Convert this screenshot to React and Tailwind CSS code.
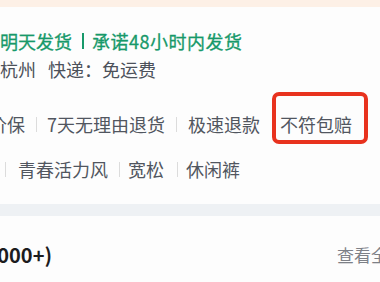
import React from 'react';

const Divider = ({ className = '' }) => (
  <span className={`inline-block w-px h-[15px] bg-[#dcdcdc] shrink-0 ${className}`} />
);

const App = () => {
  return (
    <div
      className="w-[380px] h-[282px] overflow-hidden bg-[#fdfdfd] text-[18px] whitespace-nowrap"
      style={{ fontFamily: '"Noto Sans CJK SC", "Noto Sans", sans-serif' }}
    >
      <div className="h-[7px] bg-[#fdf0e6]" />

      {/* 发货信息 */}
      <div className="mt-[20px] h-[28px] flex items-center text-[#17996a] leading-[28px] [-webkit-text-stroke:0.3px_#17996a]">
        <span>明天发货</span>
        <span className="inline-block w-[2px] h-[16px] bg-[#17996a] ml-[10px] mr-[8px]" />
        <span className="tracking-[0.5px]">承诺48小时内发货</span>
      </div>
      <div className="h-[28px] flex items-center text-[#4c515a] leading-[28px]">
        <span>杭州</span>
        <span className="ml-[12px]">快递：免运费</span>
      </div>

      {/* 服务 */}
      <div className="mt-[27px] h-[28px] flex items-center text-[#51565f] leading-[28px]">
        <span className="-ml-[11px]">价保</span>
        <Divider className="ml-[11px] mr-[10px]" />
        <span>7天无理由退货</span>
        <Divider className="mx-[11px]" />
        <span>极速退款</span>
        <Divider className="ml-[12px] mr-[7px]" />
        <span className="relative inline-block h-[28px]">
          不符包赔
          <span className="absolute -left-[8px] -right-[16px] -top-[18px] -bottom-[6px] border-[4px] border-[#e8321e] rounded-[7px]" />
        </span>
      </div>

      {/* 参数 */}
      <div className="mt-[17px] h-[28px] flex items-center text-[#51565f] leading-[28px]">
        <Divider className="ml-[5px] mr-[12px]" />
        <span>青春活力风</span>
        <Divider className="ml-[11px] mr-[8px]" />
        <span>宽松</span>
        <Divider className="ml-[13px] mr-[8px]" />
        <span>休闲裤</span>
      </div>

      <div className="mt-[21px] h-[12px] bg-[#eef1f4]" />

      {/* 评价 */}
      <div className="mt-[25px] h-[28px] flex items-center">
        <div className="w-[52px] shrink-0 flex justify-end">
          <span className="font-bold text-[#1c1c1e] text-[20px]">评价(1000+)</span>
        </div>
        <span className="ml-[285px] text-[17px] text-[#7d8087]">查看全部</span>
      </div>
    </div>
  );
};

export default App;
